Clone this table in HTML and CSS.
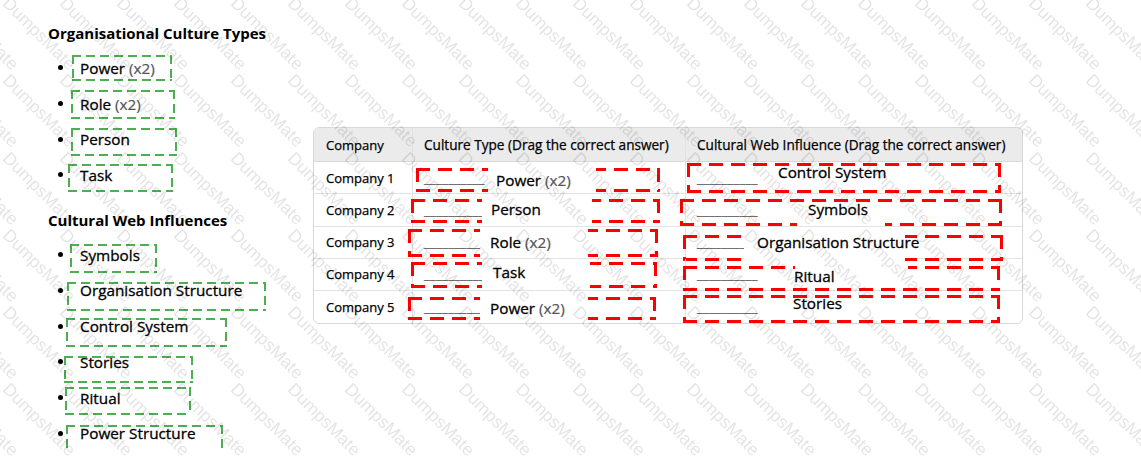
FILE: index.html
```html
<!DOCTYPE html>
<html lang="en">
<head>
<meta charset="utf-8">
<title>Organisational Culture – Drag and Drop</title>
<link rel="stylesheet" href="styles.css">
</head>
<body>
<div class="page">
  <aside class="bank">
    <h3 class="bank-title">Organisational Culture Types</h3>
    <ul class="bank-list">
      <li class="item g1">Power&nbsp;<span class="mult">(x2)</span></li>
      <li class="item g2">Role&nbsp;<span class="mult">(x2)</span></li>
      <li class="item g3">Person</li>
      <li class="item g4">Task</li>
    </ul>
    <h3 class="bank-title second">Cultural Web Influences</h3>
    <ul class="bank-list">
      <li class="item g5">Symbols</li>
      <li class="item g6">Organisation Structure</li>
      <li class="item g7">Control System</li>
      <li class="item g8">Stories</li>
      <li class="item g9">Ritual</li>
      <li class="item g10">Power Structure</li>
    </ul>
  </aside>

  <main class="board">
    <table class="grid">
      <colgroup>
        <col class="col-co">
        <col class="col-ct">
        <col class="col-cw">
      </colgroup>
      <thead>
        <tr>
          <th>Company</th>
          <th>Culture Type (Drag the correct answer)</th>
          <th>Cultural Web Influence (Drag the correct answer)</th>
        </tr>
      </thead>
      <tbody>
        <tr>
          <td>Company 1</td>
          <td class="slot"><span class="blank">__________</span>
            <div class="dz z-c1"><span class="cv"></span><span class="ans">Power <span class="mult">(x2)</span></span></div></td>
          <td class="slot"><span class="blank">__________</span>
            <div class="dz z-w1"><span class="cv"></span><span class="ans">Control System</span></div></td>
        </tr>
        <tr>
          <td>Company 2</td>
          <td class="slot"><span class="blank">__________</span>
            <div class="dz z-c2"><span class="cv"></span><span class="ans">Person</span></div></td>
          <td class="slot"><span class="blank">__________</span>
            <div class="dz z-w2"><span class="cv"></span><span class="ans">Symbols</span></div></td>
        </tr>
        <tr>
          <td>Company 3</td>
          <td class="slot"><span class="blank">__________</span>
            <div class="dz z-c3"><span class="cv"></span><span class="ans">Role <span class="mult">(x2)</span></span></div></td>
          <td class="slot"><span class="blank">________</span>
            <div class="dz z-w3"><span class="cv"></span><span class="ans">Organisation Structure</span></div></td>
        </tr>
        <tr>
          <td>Company 4</td>
          <td class="slot"><span class="blank">__________</span>
            <div class="dz z-c4"><span class="cv"></span><span class="ans">Task</span></div></td>
          <td class="slot"><span class="blank">__________</span>
            <div class="dz z-w4"><span class="cv"></span><span class="ans">Ritual</span></div></td>
        </tr>
        <tr>
          <td>Company 5</td>
          <td class="slot"><span class="blank">__________</span>
            <div class="dz z-c5"><span class="cv"></span><span class="ans">Power <span class="mult">(x2)</span></span></div></td>
          <td class="slot"><span class="blank">__________</span>
            <div class="dz z-w5"><span class="cv"></span><span class="ans">Stories</span></div></td>
        </tr>
      </tbody>
    </table>
  </main>
</div>

<div class="wm" aria-hidden="true"></div>
<script src="script.js"></script>
</body>
</html>
```

FILE: styles.css
```css
* { box-sizing: border-box; }

html { overflow: hidden; }

body {
  margin: 0;
  font-family: "Open Sans", "Noto Sans", sans-serif;
  color: #111;
  background: #fff;
}

.page { display: flex; }

/* ---------- answer bank ---------- */
.bank {
  flex: none;
  width: 313px;
  padding: 23px 0 0 48px;
}

.bank-title {
  margin: 0;
  font-size: 15px;
  font-weight: 700;
  line-height: 20px;
  color: #000;
}
.bank-title.second { margin-top: 17.2px; }

.bank-list {
  list-style: none;
  margin: 7px 0 0;
  padding: 0;
}

.item {
  position: relative;
  display: flex;
  align-items: center;
  height: 35.7px;
  padding-left: 32px;
  font-size: 15.3px;
  color: #000;
  white-space: nowrap;
  -webkit-text-stroke: 0.3px currentColor;
}

.item::before {
  content: "";
  position: absolute;
  left: 10px;
  top: 50%;
  width: 5px;
  height: 5px;
  margin-top: -2.5px;
  border-radius: 50%;
  background: #000;
}

.mult {
  color: #555;
  -webkit-text-stroke: 0.2px currentColor;
}

/* dashed frames drawn with gradients so dash length can be tuned */
.item::after,
.dz {
  background:
    linear-gradient(90deg, var(--c) var(--d), transparent 0) 0 0 / var(--p) var(--t) repeat-x,
    linear-gradient(90deg, var(--c) var(--d), transparent 0) 0 100% / var(--p) var(--t) repeat-x,
    linear-gradient(180deg, var(--c) var(--d), transparent 0) 0 0 / var(--t) var(--p) repeat-y,
    linear-gradient(180deg, var(--c) var(--d), transparent 0) 100% 0 / var(--t) var(--p) repeat-y;
}

.item::after {
  --c: #4caf50;
  --t: 2px;
  --p: 14px;
  --d: 9px;
  content: "";
  position: absolute;
  left: var(--x);
  top: var(--y);
  width: var(--w);
  height: var(--h);
}

.g1  { --x: 24px; --y: 5px;    --w: 100px; --h: 26px; }
.g2  { --x: 23px; --y: 4px;    --w: 104px; --h: 29px; }
.g3  { --x: 23px; --y: 6.5px;  --w: 106px; --h: 28px; }
.g4  { --x: 20px; --y: 6.75px; --w: 105px; --h: 28px; }
.g5  { --x: 22px; --y: 7px;    --w: 87px;  --h: 29px; }
.g6  { --x: 19px; --y: 9px;    --w: 199px; --h: 29px; }
.g7  { --x: 18px; --y: 9.5px;  --w: 161px; --h: 29px; }
.g8  { --x: 16px; --y: 11.75px;--w: 129px; --h: 27px; }
.g9  { --x: 17px; --y: 7px;    --w: 126px; --h: 28px; }
.g10 { --x: 18px; --y: 9.5px;  --w: 157px; --h: 35px; }

/* ---------- table ---------- */
.board {
  flex: none;
  padding-top: 127px;
}

.grid {
  width: 710px;
  table-layout: fixed;
  border-collapse: separate;
  border-spacing: 0;
  border: 1px solid #d8d8d8;
  border-radius: 6px;
  font-size: 13px;
  color: #000;
  -webkit-text-stroke: 0.25px currentColor;
}

.col-co { width: 98px; }
.col-ct { width: 273px; }
.col-cw { width: 337px; }

.grid th {
  height: 34px;
  padding: 0 11px;
  background: #ebebeb;
  border-bottom: 1px solid #d8d8d8;
  font-size: 13.6px;
  font-weight: 400;
  text-align: left;
  white-space: nowrap;
}
.grid th:first-child { padding-left: 12px; font-size: 13px; border-top-left-radius: 5px; }
.grid th:last-child { border-top-right-radius: 5px; }

.grid td {
  height: 32.25px;
  padding: 0 11px;
  border-bottom: 1px solid #e2e2e2;
  vertical-align: middle;
  white-space: nowrap;
}
.grid td:first-child { padding-left: 12px; }
.grid tr:last-child td { border-bottom: 0; }

.grid th + th,
.grid td + td { border-left: 1px solid #e2e2e2; }

.slot { position: relative; }

.blank {
  color: #666;
  letter-spacing: 0.4px;
}

/* drop zones (red dashed) with the dragged answer on top */
.dz {
  --c: #f00;
  --t: 3px;
  --p: 22px;
  --d: 14px;
  position: absolute;
  left: var(--x);
  top: var(--y);
  width: var(--w);
  height: var(--h);
}

.dz .cv {
  position: absolute;
  left: var(--cx, 0);
  width: var(--cw, 0);
  top: var(--ct, 0);
  bottom: var(--cb, 0);
  background: #fff;
}

.dz .ans {
  position: absolute;
  left: var(--tx);
  top: var(--ty);
  font-size: 15.3px;
  line-height: 20px;
  color: #000;
  white-space: nowrap;
  -webkit-text-stroke: 0.3px currentColor;
}

.z-c1 { --x: 3px;  --y: 6px;    --w: 244px; --h: 24px; --tx: 80px; --ty: 2px;  --cx: 72px; --cw: 108px; }
.z-c2 { --x: -2px; --y: 4.75px; --w: 249px; --h: 24px; --tx: 80px; --ty: 0px;  --cx: 71px; --cw: 110px; }
.z-c3 { --x: -5px; --y: 2.5px;  --w: 250px; --h: 28px; --tx: 82px; --ty: 3px;  --cx: 72px; --cw: 108px; }
.z-c4 { --x: -2px; --y: 3.25px; --w: 246px; --h: 26px; --tx: 82px; --ty: 0px;  --cx: 71px; --cw: 108px; }
.z-c5 { --x: -5px; --y: 6px;    --w: 248px; --h: 23px; --tx: 82px; --ty: 1px;  --cx: 72px; --cw: 108px; }

.z-w1 { --x: 1px;  --y: 1px;    --w: 314px; --h: 30px; --tx: 91px;  --ty: -1px; }
.z-w2 { --x: -6px; --y: 4.75px; --w: 322px; --h: 27px; --tx: 128px; --ty: 0px;  --cx: 117px; --cw: 88px;  --ct: 22px; }
.z-w3 { --x: -3px; --y: 8.5px;  --w: 320px; --h: 26px; --tx: 74px;  --ty: -3px; --cx: 61px;  --cw: 161px; }
.z-w4 { --x: -3px; --y: 7.25px; --w: 317px; --h: 25px; --tx: 111px; --ty: 0px;  --cx: 112px; --cw: 113px; --cb: 20px; }
.z-w5 { --x: -3px; --y: 4px;    --w: 317px; --h: 28px; --tx: 110px; --ty: -2px; }

/* ---------- watermark ---------- */
.wm {
  position: fixed;
  left: -44px;
  top: -84.25px;
  display: grid;
  grid-template-columns: repeat(23, 57px);
  grid-auto-rows: 77.25px;
  pointer-events: none;
  z-index: 10;
}

.wm span {
  display: block;
  width: 0;
  height: 20px;
  font-family: "Liberation Sans", Arial, sans-serif;
  font-size: 17.5px;
  line-height: 20px;
  color: rgba(0, 0, 0, 0.11);
  white-space: nowrap;
  transform: rotate(45deg);
  transform-origin: 0 0;
}
```

FILE: script.js
```js
(function () {
  var wm = document.querySelector('.wm');
  var cols = 23, rows = 8;
  for (var i = 0; i < cols * rows; i++) {
    var s = document.createElement('span');
    s.textContent = 'DumpsMate';
    wm.appendChild(s);
  }
})();
```
